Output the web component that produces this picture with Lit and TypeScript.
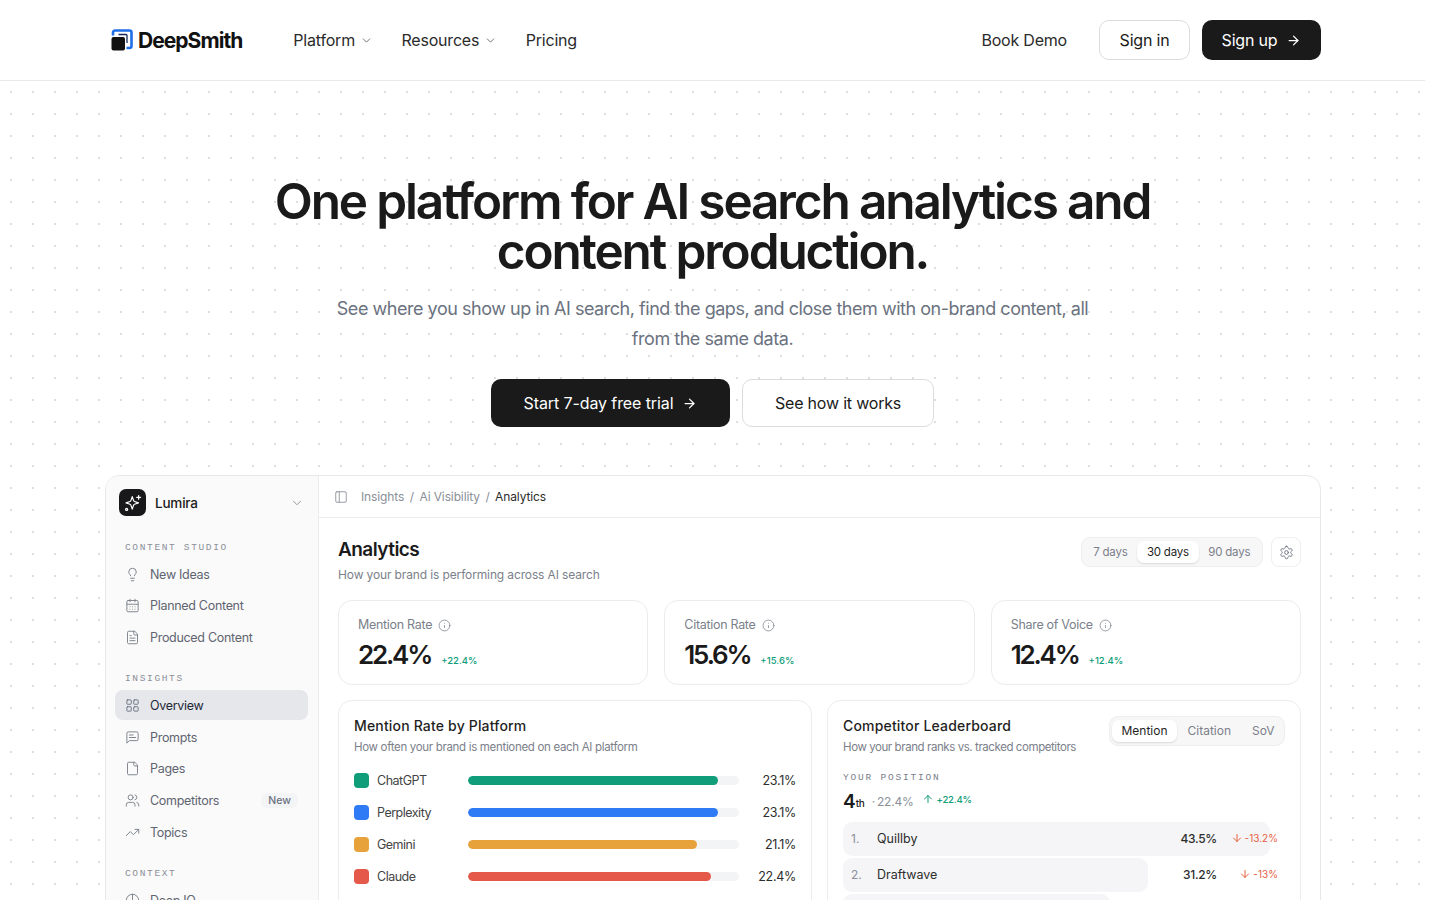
import { LitElement, html, css, svg } from "lit";
import { customElement } from "lit/decorators.js";

const ic: Record<string, any> = {
  chev: svg`<path d="m6 9 6 6 6-6"/>`,
  arrow: svg`<path d="M5 12h14"/><path d="m12 5 7 7-7 7"/>`,
  arrowUp: svg`<path d="M12 19V5"/><path d="m5 12 7-7 7 7"/>`,
  arrowDown: svg`<path d="M12 5v14"/><path d="m19 12-7 7-7-7"/>`,
  bulb: svg`<path d="M15 14c.2-1 .7-1.7 1.5-2.5 1-.9 1.5-2.2 1.5-3.5A6 6 0 0 0 6 8c0 1 .2 2.2 1.5 3.5.7.7 1.3 1.5 1.5 2.5"/><path d="M9 18h6"/><path d="M10 22h4"/>`,
  cal: svg`<path d="M8 2v4"/><path d="M16 2v4"/><rect x="3" y="4" width="18" height="18" rx="2"/><path d="M3 10h18"/><path d="M8 14h.01"/><path d="M12 14h.01"/><path d="M16 14h.01"/><path d="M8 18h.01"/><path d="M12 18h.01"/><path d="M16 18h.01"/>`,
  filetext: svg`<path d="M15 2H6a2 2 0 0 0-2 2v16a2 2 0 0 0 2 2h12a2 2 0 0 0 2-2V7Z"/><path d="M14 2v4a2 2 0 0 0 2 2h4"/><path d="M10 9H8"/><path d="M16 13H8"/><path d="M16 17H8"/>`,
  grid: svg`<rect x="3" y="3" width="7" height="7" rx="1"/><rect x="14" y="3" width="7" height="7" rx="1"/><rect x="14" y="14" width="7" height="7" rx="1"/><rect x="3" y="14" width="7" height="7" rx="1"/>`,
  msg: svg`<path d="M21 15a2 2 0 0 1-2 2H7l-4 4V5a2 2 0 0 1 2-2h14a2 2 0 0 1 2 2z"/><path d="M13 8H7"/><path d="M17 12H7"/>`,
  file: svg`<path d="M15 2H6a2 2 0 0 0-2 2v16a2 2 0 0 0 2 2h12a2 2 0 0 0 2-2V7Z"/><path d="M14 2v4a2 2 0 0 0 2 2h4"/>`,
  users: svg`<path d="M16 21v-2a4 4 0 0 0-4-4H6a4 4 0 0 0-4 4v2"/><circle cx="9" cy="7" r="4"/><path d="M22 21v-2a4 4 0 0 0-3-3.87"/><path d="M16 3.13a4 4 0 0 1 0 7.75"/>`,
  trend: svg`<path d="M22 7 13.5 15.5l-5-5L2 17"/><path d="M16 7h6v6"/>`,
  globe: svg`<circle cx="12" cy="12" r="10"/><path d="M12 2v10"/><path d="M2 12h20"/>`,
  panel: svg`<rect x="3" y="3" width="18" height="18" rx="2"/><path d="M9 3v18"/>`,
  info: svg`<circle cx="12" cy="12" r="10"/><path d="M12 16v-4"/><path d="M12 8h.01"/>`,
  gear: svg`<path d="M12.22 2h-.44a2 2 0 0 0-2 2v.18a2 2 0 0 1-1 1.73l-.43.25a2 2 0 0 1-2 0l-.15-.08a2 2 0 0 0-2.73.73l-.22.38a2 2 0 0 0 .73 2.73l.15.1a2 2 0 0 1 1 1.72v.51a2 2 0 0 1-1 1.74l-.15.09a2 2 0 0 0-.73 2.73l.22.38a2 2 0 0 0 2.73.73l.15-.08a2 2 0 0 1 2 0l.43.25a2 2 0 0 1 1 1.73V20a2 2 0 0 0 2 2h.44a2 2 0 0 0 2-2v-.18a2 2 0 0 1 1-1.73l.43-.25a2 2 0 0 1 2 0l.15.08a2 2 0 0 0 2.73-.73l.22-.39a2 2 0 0 0-.73-2.73l-.15-.08a2 2 0 0 1-1-1.74v-.5a2 2 0 0 1 1-1.74l.15-.09a2 2 0 0 0 .73-2.73l-.22-.38a2 2 0 0 0-2.73-.73l-.15.08a2 2 0 0 1-2 0l-.43-.25a2 2 0 0 1-1-1.73V4a2 2 0 0 0-2-2z"/><circle cx="12" cy="12" r="3"/>`,
  spark: svg`<path d="M11 3.500l1.800 5.300a2 2 0 0 0 1.200 1.200l5.300 1.800-5.300 1.800a2 2 0 0 0-1.200 1.200L11 20.100l-1.800-5.300A2 2 0 0 0 8 13.600l-5.300-1.800L8 10a2 2 0 0 0 1.200-1.200z"/><path d="M19.500 2v5"/><path d="M22 4.500h-5"/><circle cx="3.500" cy="20.500" r="1.400"/>`,
};
const icon = (n: string, cls = "") =>
  html`<svg class="ic ${cls}" viewBox="0 0 24 24" fill="none" stroke="currentColor" stroke-linecap="round" stroke-linejoin="round">${ic[n]}</svg>`;

const nav = [
  { t: "CONTENT STUDIO", items: [["bulb", "New Ideas"], ["cal", "Planned Content"], ["filetext", "Produced Content"]] },
  { t: "INSIGHTS", items: [["grid", "Overview", "active"], ["msg", "Prompts"], ["file", "Pages"], ["users", "Competitors", "new"], ["trend", "Topics"]] },
  { t: "CONTEXT", items: [["globe", "Deep IQ"]] },
];
const stats = [
  ["Mention Rate", "22.4%", "+22.4%"],
  ["Citation Rate", "15.6%", "+15.6%"],
  ["Share of Voice", "12.4%", "+12.4%"],
];
const bars = [
  ["ChatGPT", "#0f9d7a", 92.3, "23.1%"],
  ["Perplexity", "#2f7bf6", 92.3, "23.1%"],
  ["Gemini", "#e8a23c", 84.5, "21.1%"],
  ["Claude", "#e4594a", 89.5, "22.4%"],
];
const board = [
  ["1.", "Quillby", 96.6, "43.5%", "-13.2%"],
  ["2.", "Draftwave", 69, "31.2%", "-13%"],
  ["3.", "Inkwell", 60.4, "27.4%", "-9%"],
];

@customElement("app-root")
export class AppRoot extends LitElement {
  static styles = css`
    :host { display: block; height: 900px; overflow: hidden; background: #fff; color: #1a1a1a; font-family: "Inter", "Noto Sans", sans-serif; }
    * { box-sizing: border-box; }
    .page { width: 1425px; }
    .ic { display: block; width: 14px; height: 14px; stroke-width: 1.5; flex: none; }
    header { height: 81px; border-bottom: 1px solid #e8e8e8; padding: 0 104px 0 105px; display: flex; align-items: center; font-size: 16px; letter-spacing: -0.2px; }
    .logo { display: flex; align-items: center; gap: 5px; margin: 0 51px 0 6px; font-weight: 700; font-size: 21px; letter-spacing: -0.95px; color: #111; }
    .logo svg { display: block; }
    .nl { display: flex; align-items: center; gap: 5px; color: #2a2a2a; margin-right: 28.5px; }
    .nl .ic { width: 13px; height: 13px; color: #555; }
    .sp { flex: 1; }
    .demo { margin-right: 32px; color: #2a2a2a; }
    .btn { display: flex; align-items: center; justify-content: center; border-radius: 10px; height: 40px; }
    .btn.o { width: 91px; border: 1px solid #dcdcdc; margin-right: 12px; background: #fff; }
    .btn.d { width: 119px; background: #1a1a1a; color: #fff; gap: 9px; }
    .btn .ic { width: 15px; height: 15px; stroke-width: 2; }

    .hero { background-image: radial-gradient(circle at 11px 11px, #dedede 0.8px, transparent 1.1px); background-size: 22px 22px; padding-top: 95px; height: 819px; }
    h1 { margin: 0 auto; width: 1000px; text-align: center; font-size: 49.5px; line-height: 50px; font-weight: 600; letter-spacing: -2.13px; color: #1a1a1a; }
    .lead { margin: 18px auto 0; width: 800px; text-align: center; font-size: 18px; line-height: 30px; color: #6b7280; letter-spacing: -0.47px; }
    .cta { display: flex; justify-content: center; gap: 12px; margin-top: 25px; font-size: 16px; letter-spacing: -0.2px; }
    .cta .btn { height: 48px; margin: 0; }
    .cta .d { width: 239px; gap: 9px; letter-spacing: -0.1px; }
    .cta .o { width: 192px; }

    .dash { margin: 48px 104px 0 105px; height: 600px; border: 1px solid #e8e8ea; border-radius: 14px; display: flex; background: #fff; overflow: hidden; }
    aside { width: 213px; flex: none; background: #fafafa; border-right: 1px solid #ececee; padding: 13px 10px 0 9px; }
    .ws { display: flex; align-items: center; gap: 9px; padding: 0 0 0 4px; font-size: 13.5px; font-weight: 500; letter-spacing: -0.2px; height: 27px; margin-bottom: 26px; }
    .ws .mk { width: 27px; height: 27px; background: #18181b; border-radius: 7px; display: flex; align-items: center; justify-content: center; color: #fff; }
    .ws .mk .ic { width: 18px; height: 18px; stroke-width: 1.6; }
    .ws .ic.ch { width: 14px; height: 14px; color: #888; margin: 0 4px 0 auto; }
    .sec { margin-bottom: 21px; }
    .lab { font-family: "Liberation Mono", monospace; font-size: 9.5px; letter-spacing: 1.65px; color: #8a8f98; padding-left: 10px; height: 12px; line-height: 12px; margin-bottom: 5px; }
    .it { display: flex; align-items: center; gap: 10px; height: 30px; padding: 0 10px; border-radius: 8px; font-size: 12.5px; letter-spacing: -0.3px; color: #5f6470; margin-bottom: 1.7px; }
    .it.active { background: #e5e7eb; color: #1f2937; }
    .it.active .ic { color: #6b7280; }
    .it .ic { color: #7b808a; width: 15px; height: 15px; }
    .new { margin-left: auto; font-size: 10.5px; letter-spacing: 0; font-weight: 500; color: #6b7280; background: #f3f4f6; border-radius: 6px; padding: 1px 7px; }

    main { flex: 1; min-width: 0; }
    .crumb { height: 42px; border-bottom: 1px solid #ececee; display: flex; align-items: center; padding: 0 15px; font-size: 12px; letter-spacing: -0.12px; color: #8a8f98; gap: 5.500px; }
    .crumb .ic { margin-right: 7.500px; color: #8a8f98; }
    .crumb b { font-weight: 400; color: #2d2d2d; }
    .body { padding: 20px 19px 0; }
    .ttl { display: flex; justify-content: space-between; }
    h2 { margin: 0; font-size: 19px; line-height: 24px; font-weight: 600; letter-spacing: -0.55px; }
    .sub { font-size: 12px; color: #7b808a; letter-spacing: -0.13px; line-height: 16px; margin-top: 5px; }
    .tools { display: flex; gap: 8px; margin-top: -1px; }
    .seg { display: flex; align-items: center; height: 30px; padding: 3px 2px; background: #f7f7f8; border: 1px solid #eeeeef; border-radius: 9px; font-size: 11.5px; letter-spacing: -0.2px; color: #7b808a; }
    .seg span { padding: 0 9.67px; height: 100%; display: flex; align-items: center; }
    .seg .on { background: #fff; color: #1f1f1f; border-radius: 7px; box-shadow: 0 1px 2px rgba(0,0,0,.12); }
    .gear { width: 30px; height: 30px; border: 1px solid #eeeeef; border-radius: 8px; display: flex; align-items: center; justify-content: center; color: #6b7280; }
    .gear .ic { width: 15px; height: 15px; }
    .stats { display: grid; grid-template-columns: repeat(3, 1fr); gap: 16px; margin-top: 17px; }
    .card { border: 1px solid #ececee; border-radius: 14px; background: #fff; }
    .stat { height: 84.5px; padding: 15px 19px; }
    .sl { display: flex; align-items: center; gap: 6px; font-size: 12.5px; letter-spacing: -0.3px; color: #7b808a; line-height: 18px; }
    .sl .ic { width: 13px; height: 13px; stroke-width: 1.4; }
    .sv { display: flex; align-items: baseline; gap: 10px; margin-top: 3.500px; }
    .sv b { font-size: 26px; line-height: 34px; font-weight: 600; letter-spacing: -2.2px; color: #1a1a1a; }
    .sv i { font-style: normal; font-size: 9.500px; color: #0f9d7a; font-weight: 500; }
    .charts { display: grid; grid-template-columns: 1fr 1fr; gap: 15px; margin-top: 15px; }
    .chart { height: 300px; padding: 15px 15px; }
    h3 { margin: 0; font-size: 14px; line-height: 20px; font-weight: 500; letter-spacing: 0.17px; color: #1f1f1f; }
    .chart .sub { font-size: 11.5px; margin-top: 3px; letter-spacing: -0.32px; line-height: 16px; }
    .chart .head .sub { letter-spacing: -0.42px; }
    .rows { margin-top: 10px; }
    .bar { display: grid; grid-template-columns: 114px 271px 1fr; align-items: center; height: 32px; }
    .nm { display: flex; align-items: center; gap: 8px; font-size: 12.5px; letter-spacing: -0.5px; color: #444; }
    .sw { width: 15px; height: 15px; border-radius: 4px; }
    .tr { height: 9px; background: #f3f4f6; border-radius: 5px; overflow: hidden; }
    .fl { height: 100%; border-radius: 5px; }
    .pc { text-align: right; font-size: 12.5px; letter-spacing: -0.3px; color: #2d2d2d; }
    .head { display: flex; justify-content: space-between; align-items: flex-start; }
    .seg2 { font-size: 12px; letter-spacing: 0; width: 176px; }
    .seg2 span { padding: 0 10.5px; }
    .seg2 .on { padding: 0 9.5px; }
    .yp { font-family: "Liberation Mono", monospace; font-size: 9.5px; letter-spacing: 1.8px; color: #7b808a; margin-top: 17px; line-height: 12px; }
    .pos { display: flex; align-items: center; height: 24px; margin-top: 5px; padding-top: 1px; font-size: 12px; color: #8a8f98; letter-spacing: -0.2px; }
    .pos b { font-size: 19px; font-weight: 600; color: #1a1a1a; letter-spacing: 0; }
    .pos small { font-size: 10px; font-weight: 500; color: #1a1a1a; margin: 3px 7px 0 0; align-self: center; }
    .pos em { font-style: normal; margin-left: 2px; }
    .up { display: flex; align-items: center; gap: 3px; color: #0f9d7a; font-size: 9.5px; letter-spacing: -0.2px; font-weight: 500; margin: -4px 0 0 8px; }
    .up .ic, .dn .ic { width: 12px; height: 12px; stroke-width: 2; }
    .lb { position: relative; height: 34px; margin-bottom: 2px; display: flex; align-items: center; font-size: 12.5px; letter-spacing: 0; padding: 0 7px 0 8px; color: #2d2d2d; }
    .lb .bg { position: absolute; left: 0; top: 0; bottom: 0; background: #f5f5f7; border-radius: 9px; }
    .lb > span { position: relative; }
    .lb .n { width: 26px; color: #8a8f98; font-size: 12px; }
    .lb .v { margin-left: auto; font-weight: 500; font-size: 12px; width: 60px; text-align: right; letter-spacing: -0.3px; }
    .lb .dn { width: 61px; display: flex; justify-content: flex-end; align-items: center; gap: 2px; color: #e5603f; font-size: 10px; margin-top: -2px; }
    .list { margin-top: 9px; }
  `;

  render() {
    return html`<div class="page">
      <header>
        <div class="logo">
          <svg width="22" height="22" viewBox="0 0 22 22" fill="none">
            <path d="M2 6.500V3.500A2 2 0 0 1 4 1.500h14.500a2 2 0 0 1 2 2V17a2 2 0 0 1-2 2H15.500" stroke="#1f6fe8" stroke-width="2.600"/>
            <path d="M7.500 5.500h7.500a1 1 0 0 1 1 1V14" stroke="#16295a" stroke-width="1.300"/>
            <rect x="0.500" y="8" width="13.500" height="13.500" rx="2" fill="#111"/>
          </svg>
          <span>DeepSmith</span>
        </div>
        <span class="nl">Platform ${icon("chev")}</span>
        <span class="nl">Resources ${icon("chev")}</span>
        <span class="nl">Pricing</span>
        <span class="sp"></span>
        <span class="demo">Book Demo</span>
        <span class="btn o">Sign in</span>
        <span class="btn d">Sign up ${icon("arrow")}</span>
      </header>
      <section class="hero">
        <h1>One platform for AI search analytics and<br />content production.</h1>
        <p class="lead">See where you show up in AI search, find the gaps, and close them with on-brand content, all<br />from the same data.</p>
        <div class="cta">
          <span class="btn d">Start 7-day free trial ${icon("arrow")}</span>
          <span class="btn o">See how it works</span>
        </div>
        <div class="dash">
          <aside>
            <div class="ws"><span class="mk">${icon("spark")}</span>Lumira ${icon("chev", "ch")}</div>
            ${nav.map((s) => html`<div class="sec"><div class="lab">${s.t}</div>
              ${s.items.map((i) => html`<div class="it ${i[2] === "active" ? "active" : ""}">${icon(i[0])}<span>${i[1]}</span>${i[2] === "new" ? html`<span class="new">New</span>` : ""}</div>`)}
            </div>`)}
          </aside>
          <main>
            <div class="crumb">${icon("panel")}<span>Insights</span><span>/</span><span>Ai Visibility</span><span>/</span><b>Analytics</b></div>
            <div class="body">
              <div class="ttl">
                <div><h2>Analytics</h2><div class="sub">How your brand is performing across AI search</div></div>
                <div class="tools">
                  <div class="seg"><span>7 days</span><span class="on">30 days</span><span>90 days</span></div>
                  <div class="gear">${icon("gear")}</div>
                </div>
              </div>
              <div class="stats">
                ${stats.map((s) => html`<div class="card stat"><div class="sl">${s[0]} ${icon("info")}</div><div class="sv"><b>${s[1]}</b><i>${s[2]}</i></div></div>`)}
              </div>
              <div class="charts">
                <div class="card chart">
                  <h3>Mention Rate by Platform</h3>
                  <div class="sub">How often your brand is mentioned on each AI platform</div>
                  <div class="rows">
                    ${bars.map((b) => html`<div class="bar"><div class="nm"><span class="sw" style="background:${b[1]}"></span>${b[0]}</div><div class="tr"><div class="fl" style="width:${b[2]}%;background:${b[1]}"></div></div><div class="pc">${b[3]}</div></div>`)}
                  </div>
                </div>
                <div class="card chart">
                  <div class="head">
                    <div><h3>Competitor Leaderboard</h3><div class="sub">How your brand ranks vs. tracked competitors</div></div>
                    <div class="seg seg2"><span class="on">Mention</span><span>Citation</span><span>SoV</span></div>
                  </div>
                  <div class="yp">YOUR POSITION</div>
                  <div class="pos"><b>4</b><small>th</small>·<em>22.4%</em><span class="up">${icon("arrowUp")}+22.4%</span></div>
                  <div class="list">
                    ${board.map((r) => html`<div class="lb"><div class="bg" style="width:${r[2]}%"></div><span class="n">${r[0]}</span><span>${r[1]}</span><span class="v">${r[3]}</span><span class="dn">${icon("arrowDown")}${r[4]}</span></div>`)}
                  </div>
                </div>
              </div>
            </div>
          </main>
        </div>
      </section>
    </div>`;
  }
}
